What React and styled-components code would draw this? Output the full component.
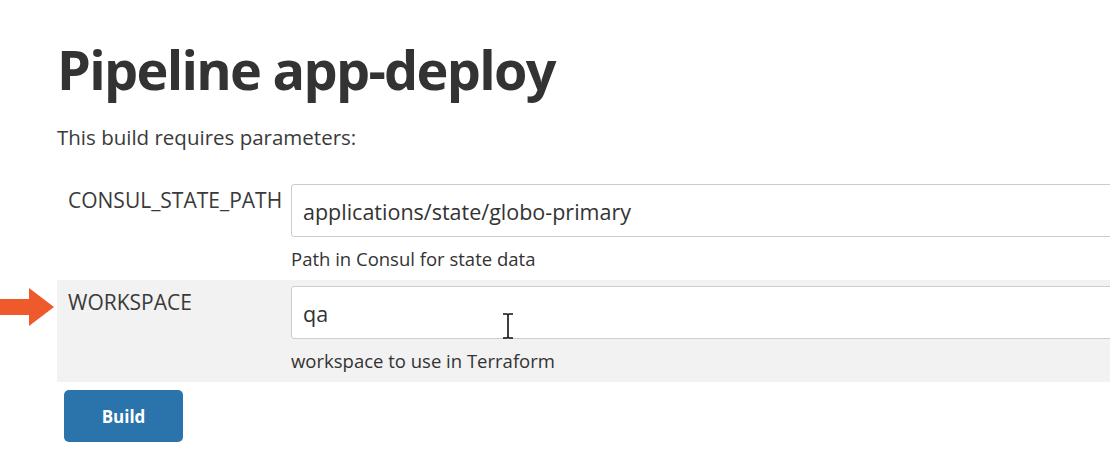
import React from 'react';
import styled, { createGlobalStyle } from 'styled-components';

const GlobalStyle = createGlobalStyle`
  html, body {
    margin: 0;
    padding: 0;
    background: #fff;
    overflow: hidden;
  }
  body {
    font-family: "Open Sans", "Liberation Sans", sans-serif;
    color: #333;
  }
`;

const Page = styled.div`
  padding: 29px 0 0 57px;
`;

const Title = styled.h1`
  margin: 0;
  font-size: 54px;
  font-weight: 700;
  line-height: 80px;
  color: #333;
  letter-spacing: -1.7px;
`;

const Intro = styled.p`
  margin: 14px 0 0;
  font-size: 20.5px;
  line-height: 28px;
  color: #3a3a3a;
`;

const Params = styled.div`
  margin-top: 27px;
  display: flex;
  flex-direction: column;
`;

const Row = styled.div`
  position: relative;
  display: grid;
  grid-template-columns: 234px 1fr;
  padding: 6px 0 0;
  height: 102px;
  box-sizing: border-box;
  background: ${({ $shaded }) => ($shaded ? '#f2f2f2' : 'transparent')};
`;

const Label = styled.div`
  padding: 2px 0 0 11px;
  font-size: 21px;
  line-height: 28px;
  color: #3a3a3a;
`;

const Field = styled.div`
  display: flex;
  flex-direction: column;
  margin-right: -12px;
`;

const InputBox = styled.div`
  position: relative;
  height: 53px;
  box-sizing: border-box;
  border: 1px solid #ccc;
  border-radius: 3px;
  background: #fff;
  padding: 2px 11px 0;
  display: flex;
  align-items: center;
  font-size: 21.5px;
  color: #333;
`;

const Help = styled.div`
  margin-top: 9px;
  font-size: 18.5px;
  line-height: 26px;
  color: #333;
`;

const Arrow = styled.svg`
  position: absolute;
  left: -57px;
  top: 8px;
`;

const Caret = styled.svg`
  position: absolute;
  left: 210px;
  bottom: -1px;
`;

const BuildButton = styled.button`
  margin: 8px 0 0 7px;
  width: 119px;
  height: 52px;
  border: none;
  border-radius: 5px;
  background: #2a74ab;
  color: #fff;
  font-family: "Open Sans", "Liberation Sans", sans-serif;
  font-size: 17px;
  font-weight: 700;
`;

const params = [
  {
    name: 'CONSUL_STATE_PATH',
    value: 'applications/state/globo-primary',
    help: 'Path in Consul for state data',
  },
  {
    name: 'WORKSPACE',
    value: 'qa',
    help: 'workspace to use in Terraform',
    shaded: true,
    marked: true,
  },
];

export default function App() {
  return (
    <Page>
      <GlobalStyle />
      <Title>Pipeline app-deploy</Title>
      <Intro>This build requires parameters:</Intro>
      <Params>
        {params.map((p) => (
          <Row key={p.name} $shaded={p.shaded}>
            {p.marked && (
              <Arrow width="56" height="40" viewBox="0 0 56 40">
                <path d="M0 11 H29 V0 L54 19 L29 38 V27 H0 Z" fill="#ee5a2b" />
              </Arrow>
            )}
            <Label>{p.name}</Label>
            <Field>
              <InputBox>
                {p.value}
                {p.marked && (
                  <Caret width="12" height="26" viewBox="0 0 12 26">
                    <path d="M1 1 H5 Q6 1 6 3 V23 Q6 25 5 25 H1 M11 1 H7 Q6 1 6 3 M6 23 Q6 25 7 25 H11" stroke="#111" strokeWidth="1.6" fill="none" />
                  </Caret>
                )}
              </InputBox>
              <Help>{p.help}</Help>
            </Field>
          </Row>
        ))}
      </Params>
      <BuildButton>Build</BuildButton>
    </Page>
  );
}
